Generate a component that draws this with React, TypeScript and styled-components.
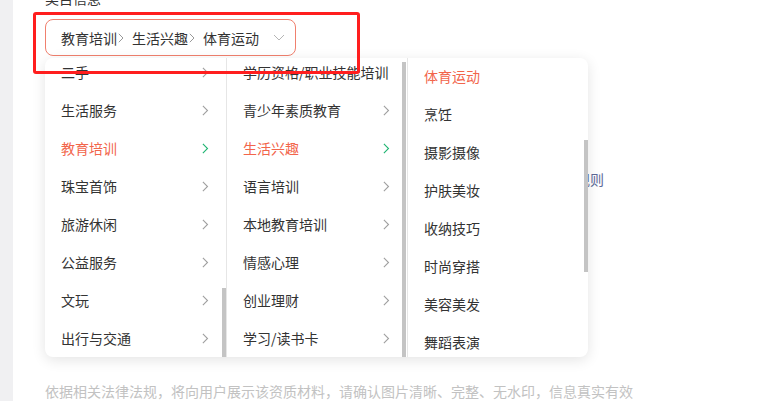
import React from "react";
import styled, { createGlobalStyle } from "styled-components";

const GlobalStyle = createGlobalStyle`
  html, body {
    margin: 0;
    padding: 0;
    background: #fff;
    overflow: hidden;
  }
  body {
    font-family: "Noto Sans CJK SC", "Noto Sans", "Liberation Sans", sans-serif;
    font-size: 14px;
    color: #333;
  }
`;

const Page = styled.div`
  display: flex;
  width: 770px;
  height: 401px;
  overflow: hidden;
`;

const SideStrip = styled.div`
  flex: 0 0 13px;
  background: #f0f0f2;
`;

const Main = styled.div`
  position: relative;
  flex: 1;
  padding-left: 32px;
  display: flex;
  flex-direction: column;
`;

const Label = styled.div`
  margin-top: -12px;
  line-height: 20px;
  color: #333;
`;

const SelectBox = styled.div`
  margin-top: 11px;
  width: 251px;
  height: 37px;
  box-sizing: border-box;
  border: 1px solid #f0806e;
  border-radius: 8px;
  display: flex;
  align-items: center;
  padding: 0 10px 0 15px;
  background: #fff;
`;

const Crumb = styled.span`
  display: inline-flex;
  align-items: center;
  margin-right: 8px;
  color: #333;
  white-space: nowrap;
`;

const CrumbSep = styled.span`
  display: inline-flex;
  margin-left: 1px;
`;

const SelectArrow = styled.span`
  margin-left: auto;
  display: inline-flex;
`;

const LinkLine = styled.div`
  margin-top: 113px;
  padding-left: 475px;
  line-height: 20px;
  color: #5d6998;
`;

const Hint = styled.div`
  margin-top: 192px;
  line-height: 20px;
  color: #c2c2c2;
  white-space: nowrap;
`;

const Popover = styled.div`
  position: absolute;
  left: 32px;
  top: 58px;
  width: 543px;
  height: 299px;
  display: flex;
  background: #fff;
  border-radius: 8px;
  box-shadow: 0 3px 14px rgba(0, 0, 0, 0.11);
  overflow: hidden;
  z-index: 2;
`;

const Column = styled.div<{ $w: number; $divider?: boolean }>`
  position: relative;
  flex: 0 0 ${(p) => p.$w}px;
  overflow: hidden;
  border-right: ${(p) => (p.$divider ? "1px solid #e6e6e6" : "none")};
`;

const List = styled.ul<{ $offset: number }>`
  list-style: none;
  margin: ${(p) => p.$offset}px 0 0;
  padding: 0;
`;

const Row = styled.li<{ $active?: boolean }>`
  height: 38px;
  display: flex;
  align-items: center;
  padding: 0 17px 0 16px;
  color: ${(p) => (p.$active ? "#f2654b" : "#333")};
  white-space: nowrap;
`;

const RowText = styled.span`
  max-width: 146px;
  overflow: hidden;
`;

const RowArrow = styled.span`
  margin-left: auto;
  display: inline-flex;
`;

const Thumb = styled.div`
  position: absolute;
  width: 4px;
  background: #c4c4c4;
`;

const Annotation = styled.div`
  position: absolute;
  left: 20px;
  top: 12px;
  width: 327px;
  height: 62px;
  box-sizing: border-box;
  border: 3px solid #ff1e1e;
  border-radius: 3px;
  z-index: 3;
  pointer-events: none;
`;

const Chevron = ({ color = "#a0a0a0", h = 10 }: { color?: string; h?: number }) => (
  <svg width={h * 0.6} height={h} viewBox="0 0 6 10" fill="none">
    <path d="M0.8 0.8l4.2 4.2-4.2 4.2" stroke={color} strokeWidth="1" />
  </svg>
);

const ChevronDown = () => (
  <svg width="12" height="7" viewBox="0 0 12 7" fill="none">
    <path d="M1 1l5 5 5-5" stroke="#b5b5b5" strokeWidth="1" />
  </svg>
);

type Item = { name: string; active?: boolean; noArrow?: boolean };

const col1: Item[] = [
  { name: "二手" },
  { name: "生活服务" },
  { name: "教育培训", active: true },
  { name: "珠宝首饰" },
  { name: "旅游休闲" },
  { name: "公益服务" },
  { name: "文玩" },
  { name: "出行与交通" },
];

const col2: Item[] = [
  { name: "学历资格/职业技能培训", noArrow: true },
  { name: "青少年素质教育" },
  { name: "生活兴趣", active: true },
  { name: "语言培训" },
  { name: "本地教育培训" },
  { name: "情感心理" },
  { name: "创业理财" },
  { name: "学习/读书卡" },
];

const col3: Item[] = [
  { name: "体育运动", active: true, noArrow: true },
  { name: "烹饪", noArrow: true },
  { name: "摄影摄像", noArrow: true },
  { name: "护肤美妆", noArrow: true },
  { name: "收纳技巧", noArrow: true },
  { name: "时尚穿搭", noArrow: true },
  { name: "美容美发", noArrow: true },
  { name: "舞蹈表演", noArrow: true },
];

const MenuColumn = ({
  items,
  width,
  offset,
  divider,
  thumb,
}: {
  items: Item[];
  width: number;
  offset: number;
  divider?: boolean;
  thumb: { right: number; top: number; height: number };
}) => (
  <Column $w={width} $divider={divider}>
    <List $offset={offset}>
      {items.map((it) => (
        <Row key={it.name} $active={it.active}>
          <RowText>{it.name}</RowText>
          {!it.noArrow && (
            <RowArrow>
              <Chevron color={it.active ? "#22b573" : "#a0a0a0"} h={11} />
            </RowArrow>
          )}
        </Row>
      ))}
    </List>
    <Thumb style={{ right: thumb.right, top: thumb.top, height: thumb.height }} />
  </Column>
);

export default function App() {
  return (
    <>
      <GlobalStyle />
      <Page>
        <SideStrip />
        <Main>
          <Label>类目信息</Label>
          <SelectBox>
            <Crumb>
              教育培训
              <CrumbSep>
                <Chevron color="#999" h={10} />
              </CrumbSep>
            </Crumb>
            <Crumb>
              生活兴趣
              <CrumbSep>
                <Chevron color="#999" h={10} />
              </CrumbSep>
            </Crumb>
            <Crumb>体育运动</Crumb>
            <SelectArrow>
              <ChevronDown />
            </SelectArrow>
          </SelectBox>
          <LinkLine>查看资质规则</LinkLine>
          <Hint>依据相关法律法规，将向用户展示该资质材料，请确认图片清晰、完整、无水印，信息真实有效</Hint>

          <Popover>
            <MenuColumn items={col1} width={181} offset={-5} divider thumb={{ right: 0, top: 230, height: 70 }} />
            <MenuColumn items={col2} width={180} offset={-5} divider thumb={{ right: 1, top: 4, height: 295 }} />
            <MenuColumn items={col3} width={180} offset={-1} thumb={{ right: 0, top: 82, height: 132 }} />
          </Popover>
          <Annotation />
        </Main>
      </Page>
    </>
  );
}
